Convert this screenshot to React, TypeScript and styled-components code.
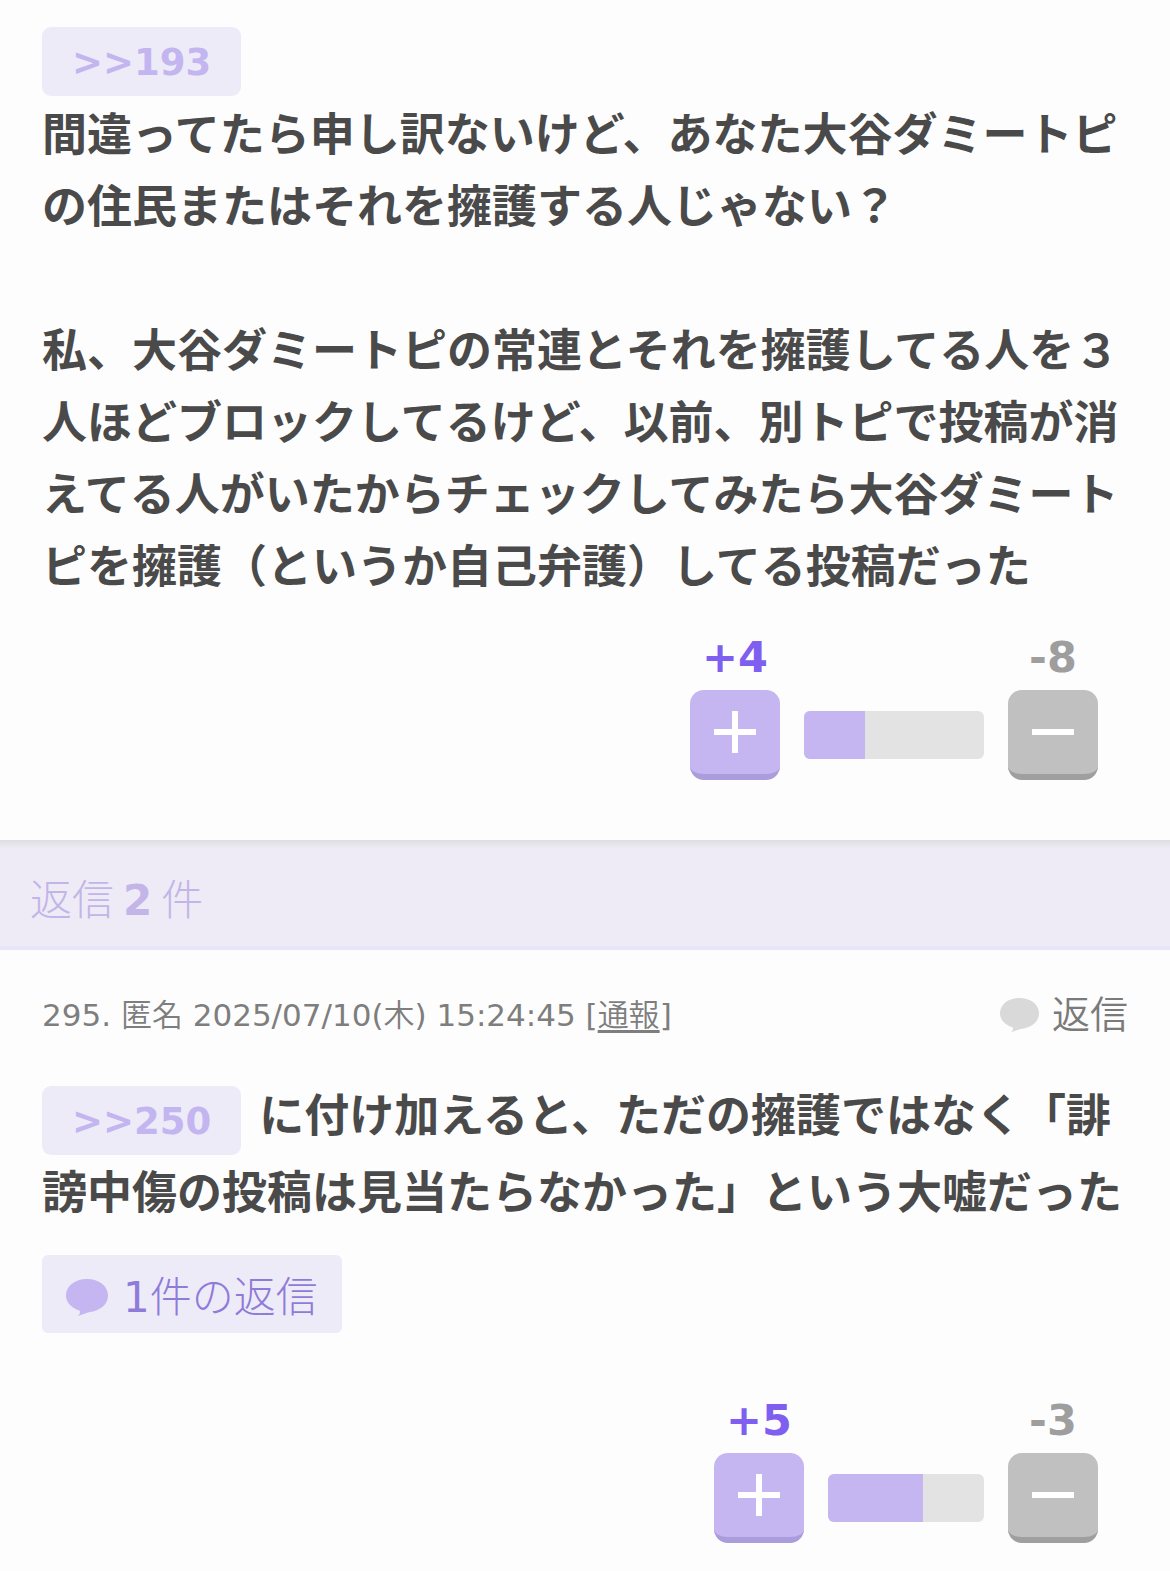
import React from "react";
import styled, { createGlobalStyle } from "styled-components";

const GlobalStyle = createGlobalStyle`
  *, *::before, *::after { box-sizing: border-box; }
  body {
    margin: 0;
    background: #fdfdfd;
    color: #4a4a4a;
    font-family: "DejaVu Sans", "Noto Sans CJK JP", sans-serif;
  }
`;

const lightStack =
  '"DejaVu Sans", "Noto Sans CJK JP Light", "Noto Sans CJK JP DemiLight", "Noto Sans CJK JP", sans-serif';

const Comment = styled.article<{ $top: number; $bottom: number }>`
  padding: ${(p) => p.$top}px 42px ${(p) => p.$bottom}px;
`;

const Body = styled.div`
  font-family: "Noto Sans CJK JP", sans-serif;
  font-size: 45px;
  font-weight: 700;
  line-height: 72px;
`;

const Paragraph = styled.p`
  margin: 0;

  & + & {
    margin-top: 72px;
  }
`;

const AnchorLink = styled.a<{ $block?: boolean }>`
  display: ${(p) => (p.$block ? "block" : "inline-block")};
  width: fit-content;
  margin: ${(p) => (p.$block ? "0" : "0 18px -1px 0")};
  padding: 2px 30px 0;
  border-radius: 9px;
  background: #eeebf8;
  color: #c3b5f0;
  font-family: "DejaVu Sans", sans-serif;
  font-size: 37px;
  line-height: 67px;
  vertical-align: middle;
  text-decoration: none;
`;

const Votes = styled.div<{ $top: number }>`
  display: flex;
  justify-content: flex-end;
  align-items: flex-end;
  gap: 24px;
  margin-top: ${(p) => p.$top}px;
  padding-right: 30px;
`;

const Vote = styled.div<{ $plus?: boolean }>`
  display: flex;
  flex-direction: column;
  align-items: center;
  gap: 9px;
  color: ${(p) => (p.$plus ? "#7f5ff0" : "#9e9e9e")};
  font-size: 43px;
  font-weight: 700;
  line-height: 48px;
`;

const VoteButton = styled.button<{ $plus?: boolean }>`
  display: flex;
  justify-content: center;
  align-items: center;
  width: 90px;
  height: 90px;
  padding: 0;
  border: 0;
  border-bottom: 6px solid ${(p) => (p.$plus ? "#ab9cdc" : "#9f9f9f")};
  border-radius: 14px;
  background: ${(p) => (p.$plus ? "#c5b5f0" : "#c0c0c0")};
  cursor: pointer;
`;

const RatioSlot = styled.div`
  display: flex;
  align-items: center;
  height: 90px;
`;

const Ratio = styled.div`
  height: 48px;
  border-radius: 6px;
  background: #e3e3e3;
  overflow: hidden;
`;

const RatioFill = styled.div`
  height: 100%;
  background: #c5b5f0;
`;

const ReplyHeading = styled.h2`
  display: flex;
  align-items: baseline;
  gap: 9px;
  margin: 0;
  padding: 31px 30px 15px;
  border-bottom: 4px solid #e8e4fa;
  background: linear-gradient(#dedee0, #eeebf6 9px);
  color: #c3b5e8;
  font-family: ${lightStack};
  font-size: 42px;
  font-weight: 400;
  line-height: 60px;

  strong {
    font-weight: 700;
  }
`;

const Meta = styled.header`
  display: flex;
  justify-content: space-between;
  align-items: center;
  margin-bottom: 38px;
  color: #7e7e7e;
  font-family: "DejaVu Sans", "Noto Sans CJK JP DemiLight", "Noto Sans CJK JP", sans-serif;
  font-size: 31px;
  line-height: 48px;
`;

const ReportLink = styled.a`
  color: inherit;
  text-underline-offset: 4px;
`;

const ReplyButton = styled.button`
  display: flex;
  align-items: center;
  gap: 13px;
  padding: 0;
  border: 0;
  background: none;
  color: #7a7a7a;
  font: inherit;
  font-size: 38px;
  cursor: pointer;
`;

const RepliesLink = styled.a`
  display: flex;
  align-items: center;
  gap: 15px;
  width: fit-content;
  height: 78px;
  margin-top: 29px;
  padding: 0 24px;
  border-radius: 6px;
  background: #eeebf8;
  color: #8f7bd8;
  font-family: ${lightStack};
  font-size: 42px;
  text-decoration: none;

  svg {
    margin-top: 8px;
  }
`;

function Bubble({ width, color }: { width: number; color: string }) {
  return (
    <svg width={width} viewBox="0 0 42 37" fill={color} aria-hidden="true">
      <path d="M21 0C33 0 42 7 42 16.500C42 26 33 32 24 33C20 33.500 17 35.500 12 37C14 35 14.500 33 13.500 31.500C5 29 0 23 0 16.500C0 7 9 0 21 0Z" />
    </svg>
  );
}

function Sign({ plus }: { plus?: boolean }) {
  return (
    <svg width="42" height="42" viewBox="0 0 42 42" fill="#fff" aria-hidden="true">
      <rect x="0" y="18" width="42" height="6" />
      {plus && <rect x="18" y="0" width="6" height="42" />}
    </svg>
  );
}

interface VoteRowProps {
  plus: number;
  minus: number;
  percent: number;
  top: number;
}

function VoteRow({ plus, minus, percent, top }: VoteRowProps) {
  return (
    <Votes $top={top}>
      <Vote $plus>
        <span>+{plus}</span>
        <VoteButton type="button" $plus aria-label="プラス">
          <Sign plus />
        </VoteButton>
      </Vote>
      <RatioSlot>
        <Ratio style={{ width: 108 + (plus + minus) * 6 }}>
          <RatioFill style={{ width: `${percent}%` }} />
        </Ratio>
      </RatioSlot>
      <Vote>
        <span>-{minus}</span>
        <VoteButton type="button" aria-label="マイナス">
          <Sign />
        </VoteButton>
      </Vote>
    </Votes>
  );
}

export default function App() {
  return (
    <main lang="ja">
      <GlobalStyle />
      <Comment $top={27} $bottom={60}>
        <Body>
          <AnchorLink href="#193" $block>&gt;&gt;193</AnchorLink>
          <Paragraph>
            間違ってたら申し訳ないけど、あなた大谷ダミートピの住民またはそれを擁護する人じゃない？
          </Paragraph>
          <Paragraph>
            私、大谷ダミートピの常連とそれを擁護してる人を３人ほどブロックしてるけど、以前、別トピで投稿が消えてる人がいたからチェックしてみたら大谷ダミートピを擁護（というか自己弁護）してる投稿だった
          </Paragraph>
        </Body>
        <VoteRow plus={4} minus={8} percent={34} top={33} />
      </Comment>
      <ReplyHeading>
        返信 <strong>2</strong> 件
      </ReplyHeading>
      <Comment $top={41} $bottom={27}>
        <Meta>
          <span>
            295. 匿名 2025/07/10(木) 15:24:45 [<ReportLink href="#report">通報</ReportLink>]
          </span>
          <ReplyButton type="button">
            <Bubble width={39} color="#d9d9d9" />
            返信
          </ReplyButton>
        </Meta>
        <Body>
          <Paragraph>
            <AnchorLink href="#250">&gt;&gt;250</AnchorLink>
            に付け加えると、ただの擁護ではなく「誹謗中傷の投稿は見当たらなかった」という大嘘だった
          </Paragraph>
        </Body>
        <RepliesLink href="#replies">
          <Bubble width={42} color="#c5b5f0" />
          1件の返信
        </RepliesLink>
        <VoteRow plus={5} minus={3} percent={61} top={63} />
      </Comment>
    </main>
  );
}
